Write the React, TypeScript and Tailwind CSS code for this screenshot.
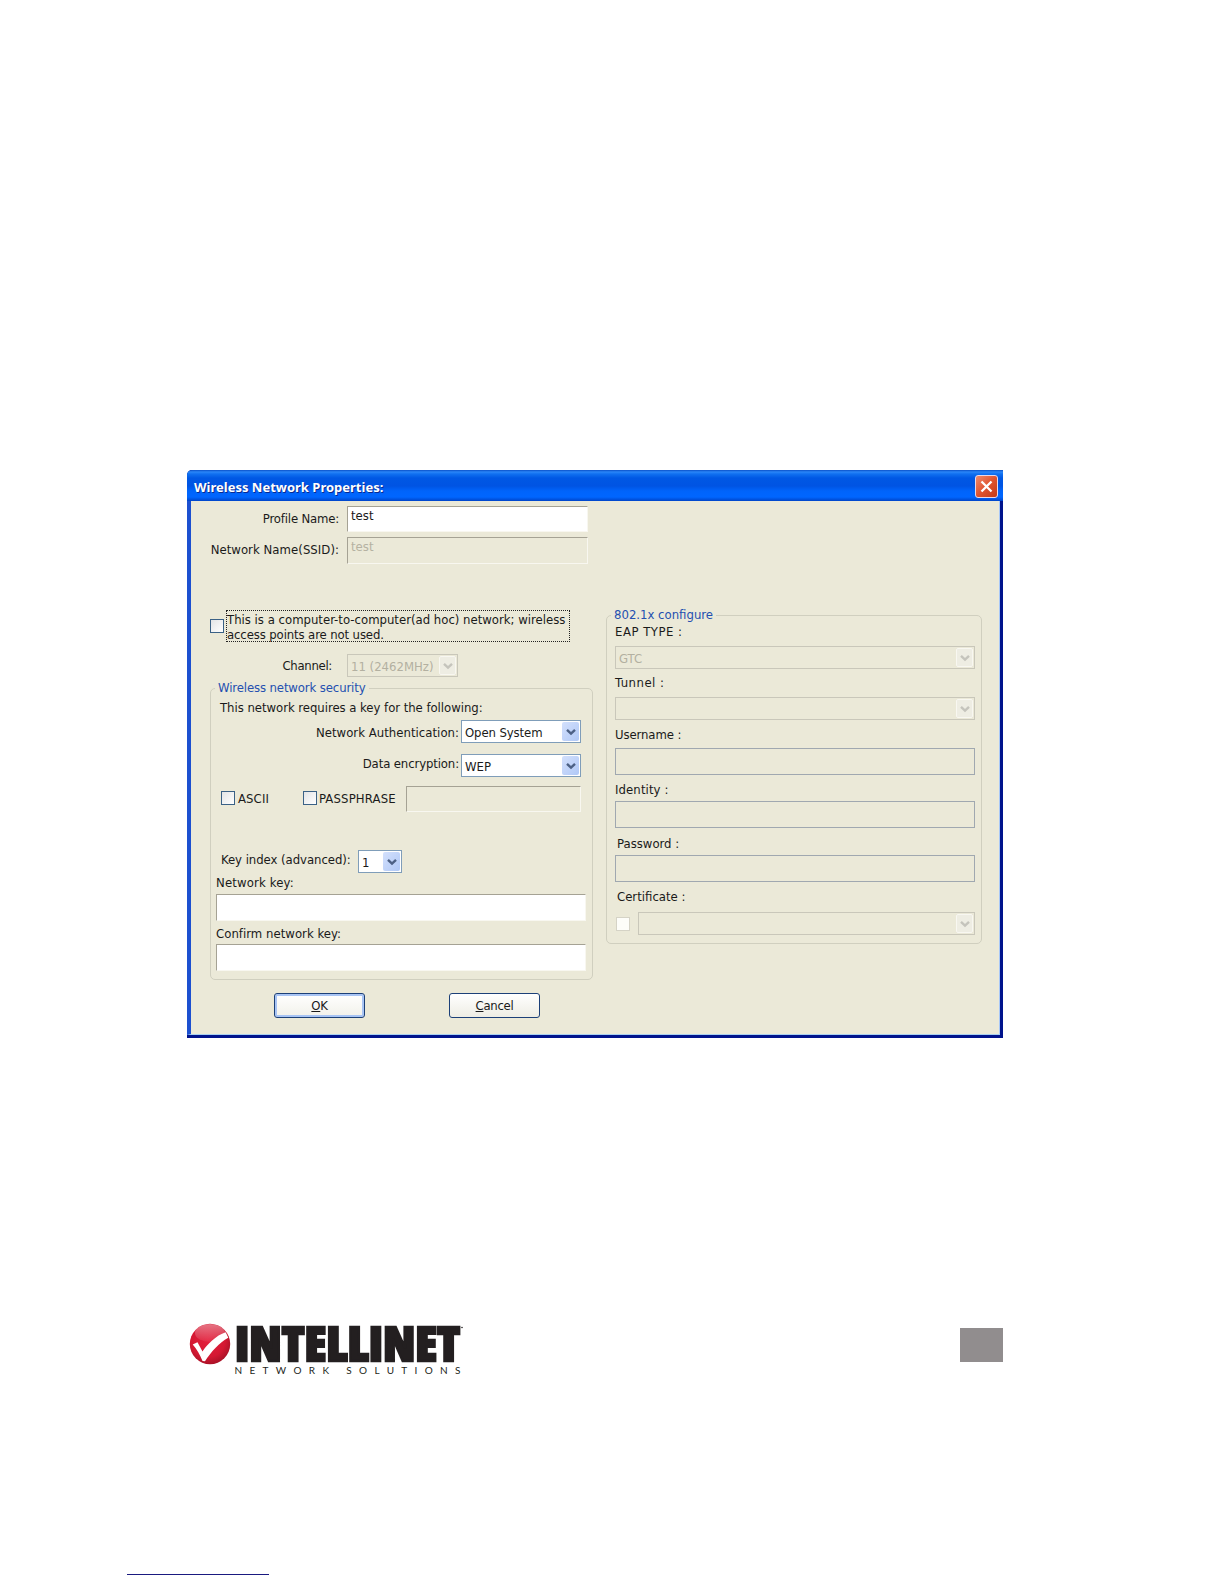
import type { ReactNode } from 'react';
import { clsx } from 'clsx';

interface BoxProps {
    className?: string;
    children?: ReactNode;
}

interface SelectProps extends BoxProps {
    disabled?: boolean;
}

const Text: React.FC<BoxProps> = ({ className, children }) => (
    <div className={clsx('h-4 whitespace-nowrap leading-4', className)}>{children}</div>
);

const Chevron: React.FC<{ color: string }> = ({ color }) => (
    <svg width="10" height="8" viewBox="0 0 10 8" fill="none">
        <path d="M1 1.8 L5 5.6 L9 1.8" stroke={color} strokeWidth="2.4" />
    </svg>
);

const Select: React.FC<SelectProps> = ({ disabled, className, children }) => (
    <div
        className={clsx(
            'flex h-[23px] shrink-0 border p-px leading-4',
            disabled ? 'border-[#c9c7ba] text-[#b3b0a1]' : 'border-[#7f9db9] bg-white',
            className
        )}
    >
        <div className="flex-1 whitespace-nowrap pl-[2px] pt-[3px]">{children}</div>
        <div
            className={clsx(
                'flex w-[17px] items-center justify-center rounded-[2px]',
                disabled
                    ? 'border border-[#f8f7f1] bg-[#eeede3]'
                    : 'bg-gradient-to-br from-[#d3e0fc] to-[#b0c8f6]'
            )}
        >
            <Chevron color={disabled ? '#c5c4bc' : '#4d6185'} />
        </div>
    </div>
);

const Checkbox: React.FC<BoxProps> = ({ className }) => (
    <div
        className={clsx(
            'h-[14px] w-[14px] shrink-0 border border-[#3a6186] bg-gradient-to-br from-[#e2e4e6] to-white',
            className
        )}
    />
);

const sunken = 'shrink-0 border border-t-[#a5a294] border-l-[#a5a294] border-r-[#f8f7f0] border-b-[#f8f7f0] pl-[3px] leading-4';
const flat = 'ml-2 h-[27px] w-[360px] border border-[#a0a8b0]';

const Group: React.FC<BoxProps & { title: string; titleClass?: string }> = ({ title, titleClass, className, children }) => (
    <fieldset className={clsx('rounded-[5px] border border-[#d0cfbf]', className)}>
        <legend className={clsx('ml-1 h-4 px-[3px] leading-4 text-[#2450b0]', titleClass)}>{title}</legend>
        {children}
    </fieldset>
);

const Security = () => (
    <Group title="Wireless network security" titleClass="tracking-[-0.12px]" className="ml-[19px] mt-[3px] h-[300px] w-[383px]">
        <Text className="ml-[9px] mt-1 tracking-[-0.04px]">This network requires a key for the following:</Text>
        <div className="mt-1 flex">
            <Text className="mt-[5px] w-[248px] text-right tracking-[0.03px]">Network Authentication:</Text>
            <Select className="ml-[2px] w-[120px] tracking-[-0.1px]">Open System</Select>
        </div>
        <div className="mt-[11px] flex">
            <Text className="mt-[2px] w-[248px] text-right tracking-[-0.12px]">Data encryption:</Text>
            <Select className="ml-[2px] w-[120px]">WEP</Select>
        </div>
        <div className="ml-[10px] mt-[9px] flex h-[26px]">
            <div className="flex w-[82px] pt-[5px]">
                <Checkbox />
                <Text className="ml-[3px] tracking-[0.1px]">ASCII</Text>
            </div>
            <div className="flex w-[103px] pt-[5px]">
                <Checkbox />
                <Text className="ml-[2px] tracking-[0.15px]">PASSPHRASE</Text>
            </div>
            <div className={clsx(sunken, 'w-[175px]')} />
        </div>
        <div className="ml-[10px] mt-[38px] flex">
            <Text className="mt-[2px] w-[137px] tracking-[-0.05px]">Key index (advanced):</Text>
            <Select className="w-[44px]">1</Select>
        </div>
        <Text className="ml-[5px] mt-[2px] tracking-[0.15px]">Network key:</Text>
        <div className={clsx(sunken, 'ml-[5px] mt-[3px] h-[27px] w-[370px] bg-white')} />
        <Text className="ml-[5px] mt-[5px] tracking-[0.03px]">Confirm network key:</Text>
        <div className={clsx(sunken, 'ml-[5px] mt-[2px] h-[27px] w-[370px] bg-white')} />
    </Group>
);

const Configure = () => (
    <Group title="802.1x configure" className="ml-1 mt-[106px] h-[337px] w-[376px]">
        <Text className="ml-2 mt-px tracking-[0.5px]">EAP TYPE :</Text>
        <Select disabled className="ml-2 mt-[6px] w-[360px]">GTC</Select>
        <Text className="ml-2 mt-[6px] tracking-[0.5px]">Tunnel :</Text>
        <Select disabled className="ml-2 mt-[6px] w-[360px]" />
        <Text className="ml-2 mt-[7px] tracking-[-0.1px]">Username :</Text>
        <div className={clsx(flat, 'mt-[5px]')} />
        <Text className="ml-2 mt-[7px] tracking-[0.1px]">Identity :</Text>
        <div className={clsx(flat, 'mt-[3px]')} />
        <Text className="ml-[10px] mt-2">Password :</Text>
        <div className={clsx(flat, 'mt-[3px]')} />
        <Text className="ml-[10px] mt-[7px]">Certificate :</Text>
        <div className="ml-[9px] mt-[7px] flex">
            <div className="mt-[5px] h-[14px] w-[14px] border border-[#d5d3c6] bg-[#fdfdf9]" />
            <Select disabled className="ml-2 w-[337px]" />
        </div>
    </Group>
);

const Logo = () => (
    <svg width="280" height="76" viewBox="0 -16 280 76">
        <defs>
            <radialGradient id="ball" cx="0.45" cy="0.4" r="0.65">
                <stop offset="0" stopColor="#e4203c" />
                <stop offset="0.65" stopColor="#d41832" />
                <stop offset="1" stopColor="#a01024" />
            </radialGradient>
            <linearGradient id="shine" x1="0" y1="0" x2="0" y2="1">
                <stop offset="0" stopColor="#fff" stopOpacity="0.4" />
                <stop offset="1" stopColor="#fff" stopOpacity="0.05" />
            </linearGradient>
        </defs>
        <circle cx="22" cy="21" r="20.2" fill="url(#ball)" />
        <ellipse cx="22" cy="10" rx="15" ry="9" fill="url(#shine)" />
        <path d="M4.7 21.5 L9.5 19.3 L14.5 28.5 C19 21.5 28 12.5 37.7 9.3 L40.3 14.8 C31 20 23 29 17 38.3 L14.5 38 C12 32 9 26 4.7 21.5 Z" fill="#fff" />
        <text
            x="47"
            y="38"
            textLength="225"
            lengthAdjust="spacingAndGlyphs"
            className="fill-[#231f20] stroke-[#231f20] font-['Open_Sans'] text-[47px] font-extrabold"
            strokeWidth="2.4"
        >
            INTELLINET
        </text>
        <circle cx="274" cy="4.5" r="0.8" fill="#231f20" />
        <text x="46.5" y="51" textLength="226" className="fill-[#231f20] font-[Lato] text-[10px]">
            NETWORK SOLUTIONS
        </text>
    </svg>
);

const Titlebar = () => (
    <div className="flex h-[31px] justify-between rounded-tl-[5px] bg-[linear-gradient(#0a50c8_0,#2a86f8_2px,#1070f0_4px,#0058e4_8px,#0054e3_16px,#0064fb_21px,#0066ff_27px,#0044c8_31px)] pl-[7px] pr-[5px]">
        <div className="pt-[7px] font-['Noto_Sans'] text-[13px] font-bold leading-5 text-white [text-shadow:1px_1px_#0a2a90]">
            Wireless Network Properties:
        </div>
        <div className="mt-[5px] flex h-[23px] w-[23px] items-center justify-center rounded-[3px] border border-[#e8d8e8] bg-gradient-to-br from-[#ee8a6c] via-[#e0532e] to-[#c03a18]">
            <svg width="13" height="13" viewBox="0 0 13 13">
                <path d="M1.5 1.5 L11.5 11.5 M11.5 1.5 L1.5 11.5" stroke="#fff" strokeWidth="2.3" />
            </svg>
        </div>
    </div>
);

const App = () => (
    <div className="h-[1584px] w-[1224px] overflow-hidden bg-white pt-[470px] font-['DejaVu_Sans_Condensed','DejaVu_Sans',sans-serif] text-[13px] text-[#1a1a1a] [font-stretch:condensed]">
        <div className="ml-[187px] h-[568px] w-[816px] rounded-tl-[5px] bg-[#00138c]">
            <Titlebar />
            <div className="flex h-[534px] w-[813px] border-b border-l-4 border-r border-b-[#a8d0f0] border-l-[#1c50d0] border-r-[#a8c8f8] bg-[#ebe9d8]">
                <div className="w-[411px]">
                    <div className="mt-[5px] flex">
                        <Text className="mt-[5px] w-[148px] text-right tracking-[-0.18px]">Profile Name:</Text>
                        <div className={clsx(sunken, 'ml-2 h-[26px] w-[241px] bg-white pt-px')}>test</div>
                    </div>
                    <div className="mt-[5px] flex">
                        <Text className="mt-[5px] w-[148px] text-right tracking-[0.05px]">Network Name(SSID):</Text>
                        <div className={clsx(sunken, 'ml-2 h-[27px] w-[241px] pt-px text-[#b5b2a2]')}>test</div>
                    </div>
                    <div className="mt-[46px] flex">
                        <Checkbox className="ml-[19px] mt-[9px]" />
                        <div className="ml-[2px] h-8 w-[344px] whitespace-nowrap border border-dotted border-[#222] pt-px leading-[15px]">
                            This is a computer-to-computer(ad hoc) network; wireless
                            <br />
                            <span className="tracking-[-0.12px]">access points are not used.</span>
                        </div>
                    </div>
                    <div className="mt-3 flex">
                        <Text className="mt-1 w-[141px] text-right tracking-[-0.3px]">Channel:</Text>
                        <Select disabled className="ml-[15px] w-[111px]">11 (2462MHz)</Select>
                    </div>
                    <Security />
                    <div className="ml-[83px] mt-[13px] flex gap-[84px] text-center leading-4 tracking-[-0.3px]">
                        <div className="h-[25px] w-[91px] rounded-[3px] border border-[#1c4078] bg-gradient-to-b from-white to-[#f2f1ea] pt-1 shadow-[inset_0_0_0_2px_#a8c4f4]">
                            <u>O</u>K
                        </div>
                        <div className="h-[25px] w-[91px] rounded-[3px] border border-[#1c4078] bg-gradient-to-b from-white to-[#eeede4] pt-1">
                            <u>C</u>ancel
                        </div>
                    </div>
                </div>
                <Configure />
            </div>
        </div>
        <div className="ml-[188px] mt-[269px] flex w-[815px] justify-between">
            <Logo />
            <div className="mt-[21px] h-[34px] w-[43px] bg-[#918d8e]" />
        </div>
        <div className="ml-[127px] mt-[191px] h-px w-[142px] bg-[#1a1a80]" />
    </div>
);

export default App;
